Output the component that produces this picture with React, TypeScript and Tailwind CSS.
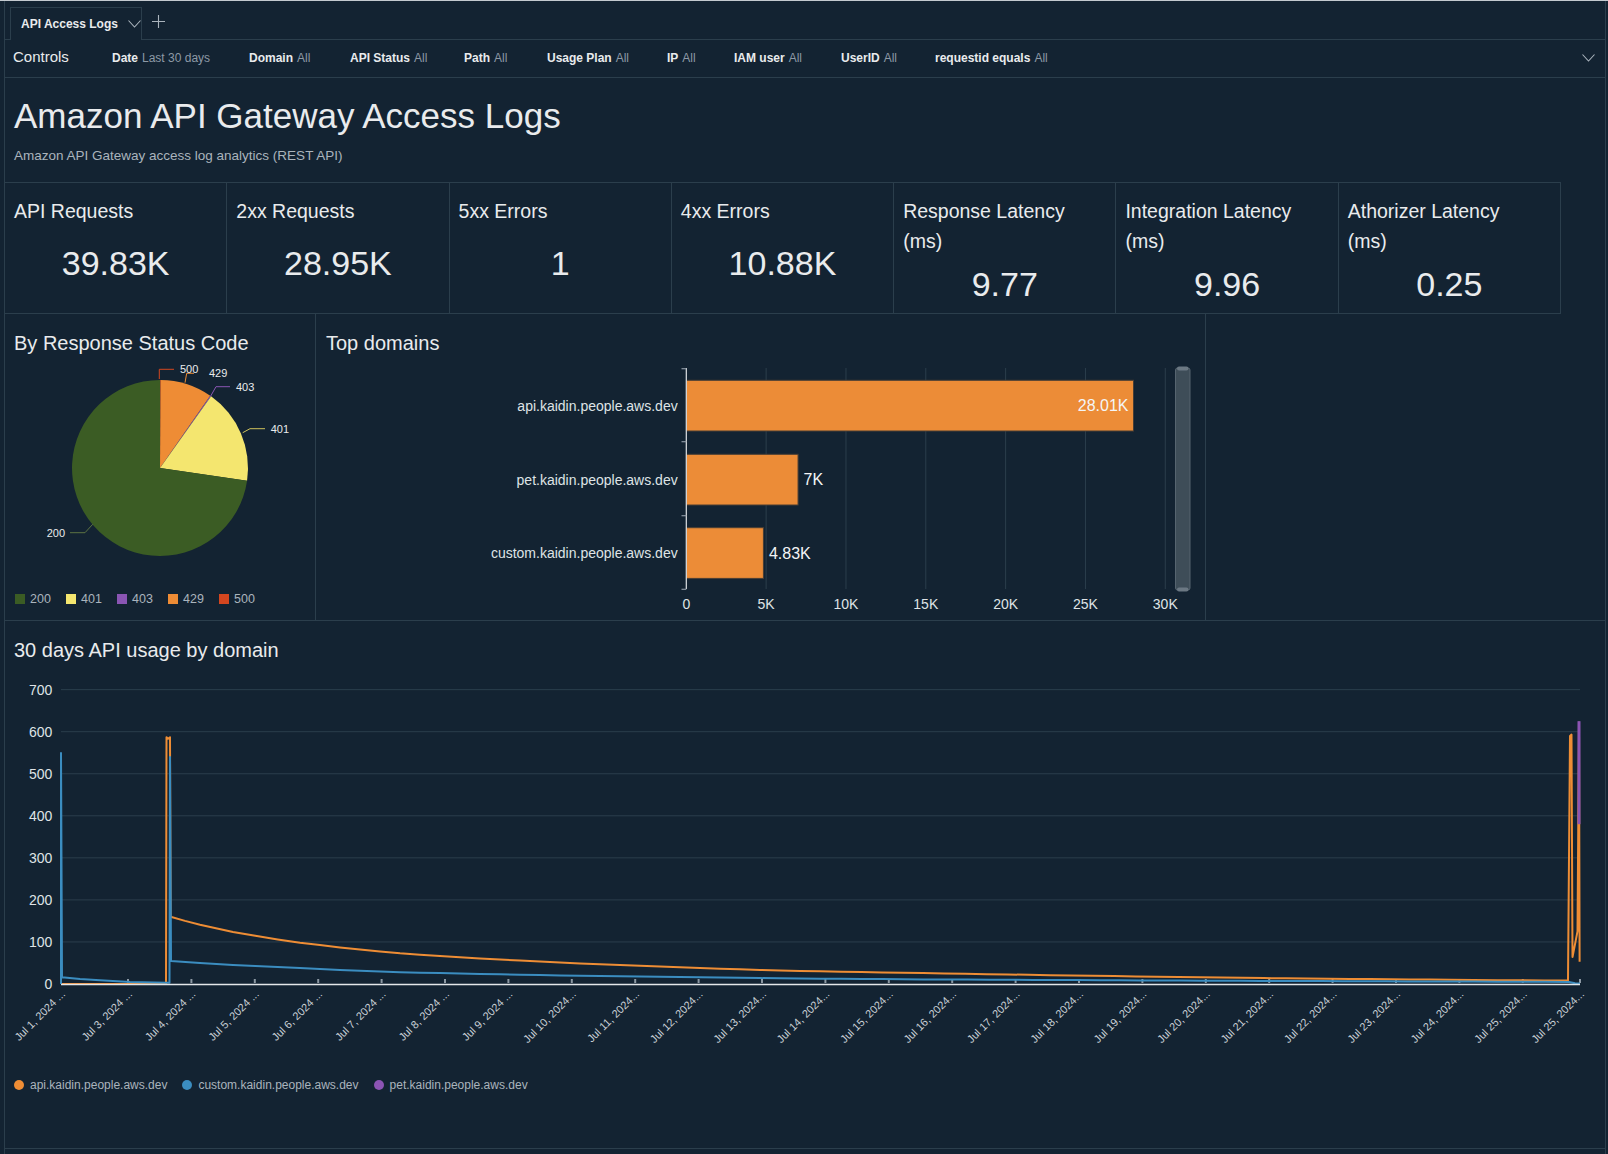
import React from 'react';

const BORDER = 'border-[#2b3e4c]';

const filters = [
  { label: 'Date', value: 'Last 30 days', w: 'w-[137px]' },
  { label: 'Domain', value: 'All', w: 'w-[101px]' },
  { label: 'API Status', value: 'All', w: 'w-[114px]' },
  { label: 'Path', value: 'All', w: 'w-[83px]' },
  { label: 'Usage Plan', value: 'All', w: 'w-[120px]' },
  { label: 'IP', value: 'All', w: 'w-[67px]' },
  { label: 'IAM user', value: 'All', w: 'w-[107px]' },
  { label: 'UserID', value: 'All', w: 'w-[94px]' },
  { label: 'requestid equals', value: 'All', w: 'w-auto' },
];

const kpis = [
  { label: 'API Requests', value: '39.83K' },
  { label: '2xx Requests', value: '28.95K' },
  { label: '5xx Errors', value: '1' },
  { label: '4xx Errors', value: '10.88K' },
  { label: 'Response Latency', sub: '(ms)', value: '9.77' },
  { label: 'Integration Latency', sub: '(ms)', value: '9.96' },
  { label: 'Athorizer Latency', sub: '(ms)', value: '0.25' },
];

function Chevron({ className }: { className?: string }) {
  return (
    <svg width="13" height="8" viewBox="0 0 13 8" className={className}>
      <polyline points="0.5,0.5 6.5,7 12.5,0.5" fill="none" stroke="#aab4bd" strokeWidth="1.1" />
    </svg>
  );
}

function PieChart() {
  const legend = [
    { code: '200', color: 'bg-[#3b5c24]' },
    { code: '401', color: 'bg-[#f4e66f]' },
    { code: '403', color: 'bg-[#8a55b3]' },
    { code: '429', color: 'bg-[#ee8c35]' },
    { code: '500', color: 'bg-[#d4461f]' },
  ];
  return (
    <div className={`w-[311px] h-full border-r ${BORDER}`}>
      <div className="pl-[9px] pt-[15px] text-[20px] leading-[29px]">By Response Status Code</div>
      <svg width="310" height="220" className="block">
        <path d="M155,110 L155,22 A88,88 0 0 1 155.61,22 Z" fill="#d4461f" />
        <path d="M155,110 L155.61,22 A88,88 0 0 1 205.22,37.74 Z" fill="#ee8c35" />
        <path d="M155,110 L205.22,37.74 A88,88 0 0 1 206.1,38.36 Z" fill="#8a55b3" />
        <path d="M155,110 L206.1,38.36 A88,88 0 0 1 242.08,122.71 Z" fill="#f4e66f" />
        <path d="M155,110 L242.08,122.71 A88,88 0 1 1 155,22 Z" fill="#3b5c24" />
        <g fill="none" strokeWidth="1">
          <polyline points="154.3,21 154.3,11.3 169,11.3" stroke="#d4461f" />
          <polyline points="180,24.7 181.7,15.3 189,15.3" stroke="#ee8c35" />
          <polyline points="205.7,38 211,28.7 225,28.7" stroke="#8a55b3" />
          <polyline points="237.7,74.7 245,70.7 260,70.7" stroke="#cfc25c" />
          <polyline points="87.7,166.3 80,174.7 65,174.7" stroke="#5d7343" />
        </g>
        <g fill="#e9ebed" fontSize="11" dominantBaseline="central">
          <text x="175" y="11.3">500</text>
          <text x="204" y="15.3">429</text>
          <text x="231" y="28.7">403</text>
          <text x="265.7" y="70.7">401</text>
          <text x="60" y="174.7" textAnchor="end">200</text>
        </g>
      </svg>
      <div className="mt-[13px] pl-[10px] flex text-[12.5px] leading-[16px] text-[#aab4bd]">
        {legend.map((l) => (
          <div key={l.code} className="flex items-center w-[51px]">
            <span className={`w-[10px] h-[10px] ${l.color}`} />
            <span className="ml-[5px]">{l.code}</span>
          </div>
        ))}
      </div>
    </div>
  );
}

function BarChart() {
  const x0 = 370.3;
  const step = 79.83;
  const scale = (v: number) => x0 + (v / 5000) * step;
  const bars = [
    { name: 'api.kaidin.people.aws.dev', v: 28010, label: '28.01K', y: 22.3, inside: true },
    { name: 'pet.kaidin.people.aws.dev', v: 7000, label: '7K', y: 96.3, inside: false },
    { name: 'custom.kaidin.people.aws.dev', v: 4830, label: '4.83K', y: 169.7, inside: false },
  ];
  const ticks = [0, 5000, 10000, 15000, 20000, 25000, 30000];
  return (
    <div className={`w-[890px] h-full border-r ${BORDER}`}>
      <div className="pl-[10px] pt-[15px] text-[20px] leading-[29px]">Top domains</div>
      <svg width="889" height="262" className="block">
        {ticks.slice(1).map((t) => (
          <line key={t} x1={scale(t)} x2={scale(t)} y1="10" y2="231" stroke="#2b3e4c" strokeWidth="1" />
        ))}
        {bars.map((b) => (
          <g key={b.name}>
            <rect x={x0} y={b.y} width={scale(b.v) - x0} height="50.7" fill="#ec8c37" stroke="#4a3f35" strokeWidth="1" />
            <text x="361.7" y={b.y + 25.3} textAnchor="end" dominantBaseline="central" fontSize="14" fill="#dfe3e6">
              {b.name}
            </text>
            <text
              x={b.inside ? scale(b.v) - 5 : scale(b.v) + 5.5}
              y={b.y + 25.3}
              textAnchor={b.inside ? 'end' : 'start'}
              dominantBaseline="central"
              fontSize="16"
              fill="#f4f5f6"
            >
              {b.label}
            </text>
          </g>
        ))}
        <line x1={x0} x2={x0} y1="10" y2="231" stroke="#dfe3e6" strokeWidth="1.2" />
        {[10.7, 83.7, 157.7, 231.3].map((y) => (
          <line key={y} x1="365.5" x2={x0} y1={y} y2={y} stroke="#8c98a3" strokeWidth="1.2" />
        ))}
        {ticks.map((t) => (
          <text key={t} x={scale(t)} y="246.3" textAnchor="middle" dominantBaseline="central" fontSize="14" fill="#dfe3e6">
            {t === 0 ? '0' : `${t / 1000}K`}
          </text>
        ))}
        <rect x="859.5" y="10" width="14.5" height="222" rx="2" fill="#3e4d58" stroke="#56646f" strokeWidth="1" />
        <rect x="861" y="8.5" width="11.5" height="4" rx="2" fill="#6b7883" />
        <rect x="861" y="229.5" width="11.5" height="4" rx="2" fill="#6b7883" />
      </svg>
    </div>
  );
}

const toY = (v: number) => 319 - v * 0.4205;
const toPath = (pts: number[][]) =>
  pts.map(([x, v], i) => `${i === 0 ? 'M' : 'L'}${(x - 5).toFixed(1)},${toY(v).toFixed(1)}`).join(' ');

function smooth(pts: number[][]) {
  // fill the decay parts with intermediate points so the curve reads smooth
  const out: number[][] = [];
  for (let i = 0; i < pts.length; i++) {
    const [x, v] = pts[i];
    out.push([x, v]);
    const next = pts[i + 1];
    if (next && next[0] - x > 40) {
      const n = Math.floor((next[0] - x) / 20);
      for (let k = 1; k < n; k++) {
        const t = k / n;
        out.push([x + (next[0] - x) * t, v * Math.pow(next[1] / Math.max(v, 0.01), t)]);
      }
    }
  }
  return out;
}

const api = [
  [61, 0], [166, 0], [166.5, 587], [168, 583], [170, 587], [170.6, 160], [185, 150], [200, 141], [233, 124], [300, 98],
  [400, 73], [500, 58], [600, 47], [700, 38], [800, 31], [923, 26], [1050, 21], [1200, 16], [1350, 12],
  [1450, 10], [1568, 8], [1570, 590], [1571.5, 593], [1572.5, 64], [1577.5, 125], [1579, 622], [1579.6, 53],
];
const custom = [
  [61, 0], [61, 549], [62, 16], [80, 12], [100, 9], [130, 5], [166, 3], [169.5, 3], [170, 540], [171, 55],
  [200, 50], [233, 45], [300, 38], [400, 28], [500, 23], [600, 19], [700, 16], [800, 13], [923, 11],
  [1100, 9], [1300, 7], [1450, 6], [1569, 5], [1575, 2], [1580, 1],
];

const dateLabels: { x: number; t: string }[] = [{ x: 61, t: 'Jul 1, 2024 ...' }];
for (let i = 0; i <= 22; i++) {
  const d = i + 3;
  dateLabels.push({ x: 128 + i * 63.4, t: d < 10 ? `Jul ${d}, 2024 ...` : `Jul ${d}, 2024...` });
}
dateLabels.push({ x: 1580, t: 'Jul 25, 2024...' });

function LineChart() {
  const grid = [100, 200, 300, 400, 500, 600, 700];
  const legend = [
    { name: 'api.kaidin.people.aws.dev', color: 'bg-[#ee8d35]' },
    { name: 'custom.kaidin.people.aws.dev', color: 'bg-[#3b8dc0]' },
    { name: 'pet.kaidin.people.aws.dev', color: 'bg-[#8c54b4]' },
  ];
  return (
    <div className={`h-[528px] border-b ${BORDER}`}>
      <div className="pl-[9px] pt-[15px] text-[20px] leading-[29px]">30 days API usage by domain</div>
      <svg width="1598" height="405" className="block">
        {grid.map((g) => (
          <line key={g} x1="56" x2="1575" y1={toY(g)} y2={toY(g)} stroke="#2b3e4c" strokeWidth="1" />
        ))}
        {[0, ...grid].map((g) => (
          <text key={g} x="47.3" y={toY(g)} textAnchor="end" dominantBaseline="central" fontSize="14" fill="#dfe3e6">
            {g}
          </text>
        ))}
        {dateLabels.slice(1).map((d, i) => (
          <line key={i} x1={d.x - 5} x2={d.x - 5} y1="314" y2="318" stroke="#8c98a3" strokeWidth="2" />
        ))}
        <path d={toPath(smooth(api))} fill="none" stroke="#ee8d35" strokeWidth="2" strokeLinejoin="round" />
        <path d={toPath(smooth(custom))} fill="none" stroke="#3b8dc0" strokeWidth="2" strokeLinejoin="round" />
        <path d={toPath([[1579, 625], [1579, 380]])} fill="none" stroke="#8c54b4" strokeWidth="3" />
        <line x1="56" x2="1575" y1="319.5" y2="319.5" stroke="#e4e7ea" strokeWidth="1.5" />
        {dateLabels.map((d, i) => (
          <text
            key={i}
            transform={`translate(${d.x - 3},${327}) rotate(-45)`}
            textAnchor="end"
            dominantBaseline="central"
            fontSize="11"
            fill="#c9d0d6"
          >
            {d.t}
          </text>
        ))}
      </svg>
      <div className="mt-[7px] pl-[9px] flex text-[12px] leading-[16px] text-[#aab4bd]">
        {legend.map((l) => (
          <div key={l.name} className="flex items-center mr-[15px]">
            <span className={`w-[10px] h-[10px] rounded-full ${l.color}`} />
            <span className="ml-[6px]">{l.name}</span>
          </div>
        ))}
      </div>
    </div>
  );
}

export default function App() {
  return (
    <div className="w-[1608px] h-[1154px] overflow-hidden bg-[#132332] border-t border-[#c4cad0] font-['Liberation_Sans',Arial,sans-serif] text-[#e9ebed]">
      <div className={`ml-[4px] w-[1602px] h-full border-x ${BORDER}`}>
        {/* sheet tabs */}
        <div className="h-[38px] flex items-end pl-[5px]">
          <div className={`relative z-10 -mb-px h-[33px] w-[132px] flex items-center pl-[10px] gap-[10px] bg-[#132332] border-t border-x ${BORDER}`}>
            <span className="text-[12px] font-bold">API Access Logs</span>
            <Chevron />
          </div>
          <svg width="13" height="13" viewBox="0 0 13 13" className="ml-[10px] mb-[11px]">
            <path d="M6.5,0 V13 M0,6.5 H13" stroke="#aab4bd" strokeWidth="1.1" />
          </svg>
        </div>

        {/* controls bar */}
        <div className={`h-[39px] flex items-center border-y ${BORDER} pl-[8px] pr-[10px] pb-[2px]`}>
          <div className="w-[99px] text-[15px]">Controls</div>
          {filters.map((f) => (
            <div key={f.label} className={`${f.w} text-[12px] whitespace-nowrap`}>
              <span className="font-bold">{f.label}</span>
              <span className="ml-[4px] text-[#8d99a6]">{f.value}</span>
            </div>
          ))}
          <div className="flex-1" />
          <Chevron />
        </div>

        {/* heading */}
        <div className="h-[104px] pl-[9px] pt-[18px]">
          <h1 className="text-[35px] leading-[40px]">Amazon API Gateway Access Logs</h1>
          <p className="mt-[11px] text-[13.5px] leading-[18px] text-[#aab4bd]">
            Amazon API Gateway access log analytics (REST API)
          </p>
        </div>

        {/* KPIs */}
        <div className={`w-[1556px] h-[132px] grid grid-cols-7 border-y ${BORDER}`}>
          {kpis.map((k) => (
            <div key={k.label} className={`border-r ${BORDER} pt-[13px]`}>
              <div className="pl-[9px] text-[19.5px] leading-[30px]">
                {k.label}
                {k.sub && (
                  <>
                    <br />
                    {k.sub}
                  </>
                )}
              </div>
              <div className={`text-center text-[34px] leading-[40px] ${k.sub ? 'mt-[8px]' : 'mt-[17px]'}`}>
                {k.value}
              </div>
            </div>
          ))}
        </div>

        {/* pie + bar */}
        <div className={`h-[307px] flex border-b ${BORDER}`}>
          <PieChart />
          <BarChart />
        </div>

        <LineChart />
      </div>
    </div>
  );
}
